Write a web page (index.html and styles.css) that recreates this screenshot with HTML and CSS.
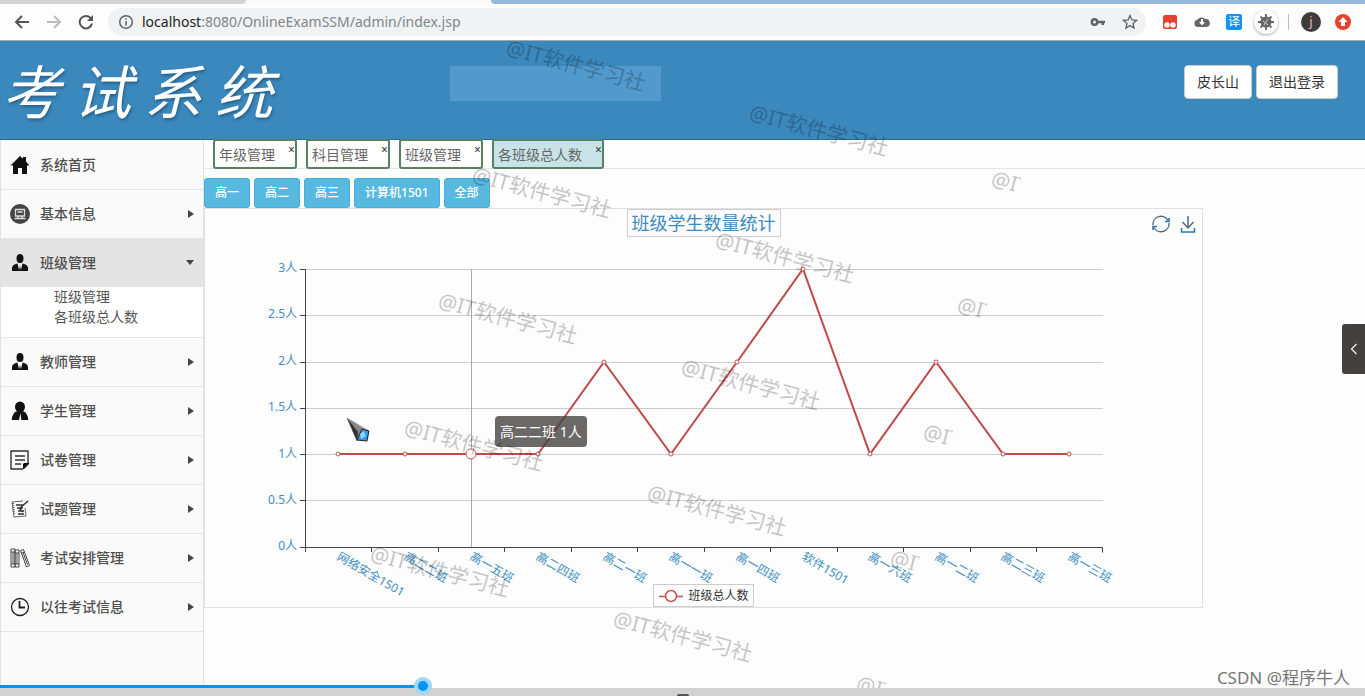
FILE: index.html
```html
<!DOCTYPE html>
<html lang="zh-CN">
<head>
<meta charset="utf-8">
<title>考试系统</title>
<link rel="stylesheet" href="styles.css">
</head>
<body>
<div class="tabstrip"><span class="tabstrip-left"></span><span class="tabstrip-active"></span><span class="tabstrip-rest"></span></div>
<div class="toolbar">
  <button class="icon-btn" aria-label="后退"><svg width="16" height="16" viewBox="0 0 16 16" fill="none" stroke="#555" stroke-width="2"><path d="M15 8H2M8 2L2 8l6 6"/></svg></button>
  <button class="icon-btn" aria-label="前进"><svg width="16" height="16" viewBox="0 0 16 16" fill="none" stroke="#bbb" stroke-width="2"><path d="M1 8h13M8 2l6 6-6 6"/></svg></button>
  <button class="icon-btn" aria-label="刷新"><svg width="16" height="16" viewBox="0 0 16 16"><path d="M13 4.600A6.200 6.200 0 1 0 14 9.500" fill="none" stroke="#555" stroke-width="2"/><path d="M15 1v6H9z" fill="#555"/></svg></button>
  <div class="address">
    <svg width="16" height="16" viewBox="0 0 16 16" fill="none" stroke="#5f6368" stroke-width="1.500"><circle cx="8" cy="8" r="6.300"/><path d="M8 7v4.500M8 4.300v1.500"/></svg>
    <div class="url"><span class="url-host">localhost</span>:8080/OnlineExamSSM/admin/index.jsp</div>
    <svg class="push" width="16" height="16" viewBox="0 0 16 16"><circle cx="4.500" cy="8" r="2.700" fill="none" stroke="#5f6368" stroke-width="2.400"/><path d="M7 6.800h8v2.500h-1V11h-2.500V9.300H7z" fill="#5f6368"/></svg>
    <svg width="16" height="16" viewBox="0 0 16 16" fill="none" stroke="#5f6368" stroke-width="1.300"><path d="M8 1.500l1.900 4.400 4.700.4-3.600 3.100 1.100 4.700L8 11.600l-4.100 2.500L5 9.400 1.400 6.300l4.700-.4z"/></svg>
  </div>
  <div class="extensions">
    <svg width="16" height="16" viewBox="0 0 16 16"><rect x="1" y="1" width="14" height="14" rx="2" fill="#e5412d"/><circle cx="5" cy="11" r="2.700" fill="#fff"/><circle cx="11" cy="11" r="2.700" fill="#fff"/></svg>
    <svg width="16" height="16" viewBox="0 0 16 16"><path d="M4 13a3.700 3.700 0 0 1-.7-7.300A5 5 0 0 1 11 5a4 4 0 0 1 1.500 8z" fill="#666"/><path d="M7 5h2v3h2l-3 3.500L5 8h2z" fill="#fff"/></svg>
    <span class="ext-translate">译</span>
    <span class="ext-bug"><svg width="18" height="18" viewBox="0 0 18 18"><circle cx="9" cy="9" r="5.500" fill="#666"/><path d="M9 1v16M1 9h16M3.500 3.500l11 11M14.500 3.500l-11 11" stroke="#666" stroke-width="1.800"/><path d="M6 8l5 4M7 12l4-6" stroke="#ccc"/></svg></span>
    <span class="ext-sep"></span>
    <span class="avatar">j</span>
    <svg width="16" height="16" viewBox="0 0 16 16"><circle cx="8" cy="8" r="8" fill="#e5412d"/><path d="M8 3l4.500 5H10v4H6V8H3.500z" fill="#fff"/></svg>
  </div>
</div>

<header class="banner">
  <h1 class="brand">考 试 系 统</h1>
  <div class="banner-block"></div>
  <div class="user-actions"><button class="white-btn">皮长山</button><button class="white-btn">退出登录</button></div>
</header>

<div class="layout">
  <nav class="sidebar">
    <a class="item home" href="#"><svg width="20" height="20" viewBox="0 0 20 20" fill="#111"><path d="M10 1l3 2.800V2h3v4.500l3.500 4H17V19h-5v-6H8v6H3v-8.500H.5z"/></svg>系统首页</a>
    <a class="item more" href="#"><svg width="20" height="20" viewBox="0 0 20 20"><circle cx="10" cy="10" r="10" fill="#444"/><path d="M5.500 5.500h9v6.500h-9zM7.500 8h5M4.500 14.500h11M8 12.500v2M12 12.500v2" fill="none" stroke="#ddd" stroke-width="1.300"/></svg>基本信息</a>
    <a class="item more open" href="#"><svg width="20" height="20" viewBox="0 0 20 20" fill="#111"><ellipse cx="10" cy="5.500" rx="3.500" ry="4.500"/><path d="M7.500 10.500L9 17l1-4 1 4 1.500-6.500C16 11.500 18 12.500 18 15v3H2v-3c0-2.500 2-3.500 5.500-4.500z"/></svg>班级管理</a>
    <div class="submenu"><a href="#">班级管理</a><a href="#">各班级总人数</a></div>
    <a class="item more" href="#"><svg width="20" height="20" viewBox="0 0 20 20" fill="#111"><ellipse cx="10" cy="5.500" rx="3.500" ry="4.500"/><path d="M7.500 10.500L9 17l1-4 1 4 1.500-6.500C16 11.500 18 12.500 18 15v3H2v-3c0-2.500 2-3.500 5.500-4.500z"/></svg>教师管理</a>
    <a class="item more" href="#"><svg width="20" height="20" viewBox="0 0 20 20" fill="#111"><ellipse cx="10" cy="6" rx="5" ry="5.500"/><path d="M6 10.500h8c2.500 1.500 4 4 4.300 8.500h-7L10.500 12 9 19H1.700C2 14.500 3.500 12 6 10.500z"/></svg>学生管理</a>
    <a class="item more" href="#"><svg width="20" height="20" viewBox="0 0 20 20"><path d="M18 13V1H1v18h12M5 6h10M5 10h10M5 14h6" fill="none" stroke="#333" stroke-width="1.400"/><path d="M19 13v1l-5 5h-1v-5l1-1z" fill="#111"/></svg>试卷管理</a>
    <a class="item more" href="#"><svg width="20" height="20" viewBox="0 0 20 20" fill="none" stroke="#666"><path d="M13 2L2 3l2 15 12-1-1-8"/><path d="M6 6h8M7 9h6M8 12h6M8 15h6M9 9l4 4M18 2l-9 8" stroke="#333" stroke-width="1.500"/><path d="M3 4l1 12" stroke-width="2" stroke-dasharray="1 1"/></svg>试题管理</a>
    <a class="item more" href="#"><svg width="20" height="20" viewBox="0 0 20 20" fill="none" stroke="#444"><path d="M1 1h4v18H1zM5 2h4v17H5zM10.500 2.500l3-1 6 16-3 1.500zM1 4h4M5 5h4M1 16h4M5 16h4M11.500 5l3-1M3 4v12M7 5v11M13 4.500l4.500 12"/></svg>考试安排管理</a>
    <a class="item more" href="#"><svg width="20" height="20" viewBox="0 0 20 20" fill="none" stroke="#222"><circle cx="10" cy="10" r="8.500" stroke-width="1.300"/><path d="M9.500 4v6.500H15" stroke-width="1.800"/></svg>以往考试信息</a>
  </nav>

  <main class="content">
    <div class="tabs">
      <div class="tab">年级管理<button class="close" aria-label="关闭年级管理">×</button></div>
      <div class="tab">科目管理<button class="close" aria-label="关闭科目管理">×</button></div>
      <div class="tab">班级管理<button class="close" aria-label="关闭班级管理">×</button></div>
      <div class="tab current">各班级总人数<button class="close" aria-label="关闭各班级总人数">×</button></div>
    </div>
    <div class="filters">
      <button>高一</button><button>高二</button><button>高三</button><button>计算机1501</button><button>全部</button>
    </div>
    <section class="chart">
      <div class="chart-head">
        <h2>班级学生数量统计</h2>
        <div class="chart-tools">
          <button class="icon-btn" aria-label="还原"><svg width="18" height="18" viewBox="0 0 18 18" fill="none" stroke="#54697c" stroke-width="1.400"><path d="M1 10a8 8 0 0 1 15-4.500M17 8a8 8 0 0 1-15 4.500"/><path d="M17 3v3.500h-4M1 15v-3.500h4" stroke="#287ab2" stroke-width="1.600"/></svg></button>
          <button class="icon-btn" aria-label="保存为图片"><svg width="16" height="18" viewBox="0 0 16 18" fill="none" stroke="#54697c" stroke-width="1.500"><path d="M8 1v12M2.500 7L8 13l5.500-6"/><path d="M1.500 13v4h13v-4" stroke="#287ab2"/></svg></button>
        </div>
      </div>
      <svg class="plot" width="997" height="346" viewBox="0 0 997 346">
        <path class="grid-line" d="M101 31.500h797M101 77.500h797M101 124.500h797M101 170.500h797M101 216.500h797M101 262.500h797"/>
        <path class="pointer-line" d="M266.500 31v278"/>
        <path class="axis" d="M100.500 31v283M95 31.500h5M95 77.500h5M95 124.500h5M95 170.500h5M95 216.500h5M95 262.500h5M95 309.500h802.500v5M166.500 310v4M233.500 310v4M299.500 310v4M366.500 310v4M432.500 310v4M499.500 310v4M565.500 310v4M632.500 310v4M698.500 310v4M765.500 310v4M831.500 310v4"/>
        <g class="y-labels"><text x="92" y="34">3人</text><text x="92" y="80">2.5人</text><text x="92" y="127">2人</text><text x="92" y="173">1.5人</text><text x="92" y="220">1人</text><text x="92" y="266">0.5人</text><text x="92" y="312">0人</text></g>
        <g class="x-labels">
          <text transform="translate(131 321) rotate(30)">网络安全1501</text><text transform="translate(198 321) rotate(30)">高二二班</text><text transform="translate(264 321) rotate(30)">高一五班</text><text transform="translate(330 321) rotate(30)">高二四班</text><text transform="translate(397 321) rotate(30)">高二一班</text><text transform="translate(463 321) rotate(30)">高一一班</text><text transform="translate(530 321) rotate(30)">高一四班</text><text transform="translate(596 321) rotate(30)">软件1501</text><text transform="translate(662 321) rotate(30)">高一六班</text><text transform="translate(729 321) rotate(30)">高一二班</text><text transform="translate(795 321) rotate(30)">高二三班</text><text transform="translate(862 321) rotate(30)">高一三班</text>
        </g>
        <polyline class="series" points="133,216 200,216 266,216 333,216 399,124 466,216 532,124 598,31 665,216 731,124 798,216 864,216"/>
        <g class="dots"><circle cx="133" cy="216" r="2"/><circle cx="200" cy="216" r="2"/><circle cx="266" cy="216" r="5"/><circle cx="333" cy="216" r="2"/><circle cx="399" cy="124" r="2"/><circle cx="466" cy="216" r="2"/><circle cx="532" cy="124" r="2"/><circle cx="598" cy="31" r="2"/><circle cx="665" cy="216" r="2"/><circle cx="731" cy="124" r="2"/><circle cx="798" cy="216" r="2"/><circle cx="864" cy="216" r="2"/></g>
      </svg>
      <div class="legend"><svg width="24" height="14" viewBox="0 0 24 14" fill="none" stroke="#c85450" stroke-width="1.500"><path d="M0 7.500h6M18 7.500h6"/><circle cx="12" cy="7" r="5.500"/></svg>班级总人数</div>
      <div class="tooltip">高二二班 1人</div>
      <svg class="cursor" width="26" height="26" viewBox="0 0 26 26"><path d="M1 1l22 13-8 1-4 9z" fill="#888" stroke="#aaa"/><path d="M1 1l11 14-1 9z" fill="#333"/><path d="M16 12l7 2-2 10-10-1z" fill="#3098e8" stroke="#222"/><path d="M14 17l4-3 2 5-5 3z" fill="#8bd6ff"/></svg>
    </section>
  </main>
</div>

<button class="drawer" aria-label="展开"><svg width="8" height="12" viewBox="0 0 8 12" fill="none" stroke="#eee" stroke-width="1.300"><path d="M6.500 1l-5 5 5 5"/></svg></button>
<svg class="watermarks" aria-hidden="true">
  <defs><clipPath id="cut"><rect x="0" y="-24" width="28" height="34"/></clipPath></defs>
  <g>
    <text transform="translate(505 54) rotate(15)">@IT软件学习社</text>
    <text transform="translate(748 119) rotate(15)">@IT软件学习社</text>
    <text transform="translate(471 181) rotate(15)">@IT软件学习社</text>
    <text transform="translate(714 246) rotate(15)">@IT软件学习社</text>
    <text transform="translate(437 307) rotate(15)">@IT软件学习社</text>
    <text transform="translate(680 373) rotate(15)">@IT软件学习社</text>
    <text transform="translate(403 434) rotate(15)">@IT软件学习社</text>
    <text transform="translate(646 499) rotate(15)">@IT软件学习社</text>
    <text transform="translate(369 560) rotate(15)">@IT软件学习社</text>
    <text transform="translate(612 625) rotate(15)">@IT软件学习社</text>
    <text clip-path="url(#cut)" transform="translate(990 185) rotate(15)">@IT</text>
    <text clip-path="url(#cut)" transform="translate(956 311) rotate(15)">@IT</text>
    <text clip-path="url(#cut)" transform="translate(922 438) rotate(15)">@IT</text>
    <text clip-path="url(#cut)" transform="translate(889 564) rotate(15)">@IT</text>
    <text clip-path="url(#cut)" transform="translate(855 690) rotate(15)">@IT</text>
  </g>
</svg>
<div class="player"><div class="player-line"><span class="knob"></span></div><div class="player-base"><span class="grip"></span></div></div>
<div class="credit">CSDN @程序牛人</div>
</body>
</html>
```
FILE: styles.css
```css
* { box-sizing: border-box; }
body {
  margin: 0;
  min-height: 100vh;
  display: flex;
  flex-direction: column;
  background: #fdfdfd;
  color: #444;
  font: 14px/20px "Noto Sans", "Noto Sans CJK SC", sans-serif;
  overflow: hidden;
}
button { font: inherit; color: inherit; margin: 0; padding: 0; border: 0; background: none; }
a { color: inherit; text-decoration: none; }
svg { flex: none; }

.tabstrip { display: flex; height: 4px; background: #fafafa; }
.tabstrip-left { width: 18%; background: #d2d3d5; border-radius: 0 0 6px 0; }
.tabstrip-active { width: 18%; }
.tabstrip-rest { flex: 1; background: #95b9dc; border-radius: 0 0 0 6px; }
.toolbar {
  display: flex;
  align-items: center;
  height: 37px;
  padding: 0 14px;
  gap: 16px;
  background: #fdfdfd;
  border-bottom: 1px solid #a5a9ac;
}
.icon-btn { display: flex; }
.address {
  flex: 1;
  display: flex;
  align-items: center;
  gap: 8px;
  height: 28px;
  margin-left: -2px;
  padding: 0 8px 0 10px;
  border-radius: 14px;
  background: #f1f2f4;
}
.url { color: #80868b; }
.url-host { color: #222; }
.push { margin-left: auto; margin-right: 8px; }
.extensions { display: flex; align-items: center; gap: 16px; }
.ext-translate { width: 16px; height: 16px; border-radius: 2px; background: #1592f0; color: #fff; font-size: 12px; line-height: 16px; text-align: center; }
.ext-bug { display: flex; align-items: center; justify-content: center; width: 24px; height: 24px; margin: 0 -4px; border-radius: 50%; background: #fff; box-shadow: 0 1px 3px #aaa; }
.ext-sep { width: 1px; height: 16px; background: #bbb; margin: 0 -4px 0 -2px; }
.avatar { width: 20px; height: 20px; border-radius: 50%; background: #403c3c; color: #e6b8b8; font-size: 13px; line-height: 18px; text-align: center; margin-right: -2px; }

.banner {
  display: grid;
  grid-template-columns: 33% 211px 1fr;
  align-items: start;
  height: 99px;
  background: #3b88bd;
  border-bottom: 1px solid #2c6c80;
}
.brand {
  margin: 0;
  padding: 12px 0 0 2px;
  color: #fff;
  font: italic 400 58px/72px "Noto Sans CJK SC", sans-serif;
  text-shadow: 1px 2px 3px #275f87;
  white-space: nowrap;
}
.banner-block { height: 35px; margin-top: 25px; background: #529acd; }
.user-actions { display: flex; justify-content: flex-end; gap: 4px; padding: 24px 27px 0 0; }
.white-btn { height: 34px; padding: 0 12px; border: 1px solid #ccc; border-radius: 4px; background: #fff; color: #333; }

.layout { flex: 1; display: flex; }
.sidebar { width: 204px; flex: none; background: #fafafa; border: solid #e2e2e2; border-width: 0 1px; }
.item {
  display: flex;
  align-items: center;
  gap: 10px;
  height: 49px;
  padding: 0 9px;
  border-bottom: 1px solid #e5e5e5;
  color: #505050;
  font-weight: 500;
}
.item.home { height: 50px; }
.item.more::after { content: ""; margin-left: auto; border: 4px solid transparent; border-left: 6px solid #444; border-right: 0; }
.item.open { height: 48px; background: #e4e4e4; }
.item.open::after { border: 4px solid transparent; border-top: 5px solid #444; border-bottom: 0; }
.submenu { display: flex; flex-direction: column; height: 51px; padding-left: 53px; background: #fff; border-bottom: 1px solid #e5e5e5; color: #555; }

.content { flex: 1; min-width: 0; }
.tabs { display: flex; gap: 9px; height: 29px; padding-left: 9px; border-bottom: 1px solid #e4e4e4; }
.tab {
  display: flex;
  align-items: flex-start;
  height: 30px;
  margin-top: -1px;
  padding-left: 4px;
  gap: 13px;
  border: 2px solid #568263;
  border-radius: 3px;
  background: #fff;
  color: #666;
  line-height: 28px;
  white-space: nowrap;
}
.tab.current { background: #c8e3e8; }
.close { width: 7px; font-size: 12px; line-height: 18px; color: #333; }
.filters { display: flex; gap: 4px; padding-top: 9px; }
.filters button { height: 30px; padding: 0 10px; border: 1px solid #46b0d8; border-radius: 3px; background: #57b8e0; color: #fff; font-size: 12px; font-weight: 500; }

.chart {
  position: relative;
  display: flex;
  flex-direction: column;
  width: max-content;
  border: 1px solid #e0e0e0;
}
.chart-head { display: grid; grid-template-columns: 1fr auto 1fr; align-items: start; height: 29px; }
.chart-head h2 { grid-column: 2; margin: 0; padding: 0 4px; border: 1px solid #ccc; color: #3b8bbd; font-size: 18px; line-height: 26px; font-weight: 400; }
.chart-tools { display: flex; justify-content: flex-end; gap: 10px; padding: 6px 6px 0 0; }
.plot { display: block; overflow: visible; font-size: 12px; }
.grid-line { stroke: #ccc; fill: none; }
.pointer-line { stroke: #aaa; }
.axis { stroke: #444; fill: none; }
.y-labels { fill: #3f8fc0; text-anchor: end; }
.x-labels { fill: #3f8fc0; }
.series { fill: none; stroke: #c2494a; stroke-width: 2; }
.dots { fill: #fff; stroke: #c85450; }
.legend { align-self: center; display: flex; align-items: center; gap: 5px; height: 23px; padding: 0 4px 0 5px; border: 1px solid #ccc; font-size: 12px; color: #333; }
.tooltip { position: absolute; left: 290px; top: 207px; padding: 5px; border-radius: 4px; background: rgba(70, 66, 66, .8); color: #fff; line-height: 21px; white-space: nowrap; }
.cursor { position: absolute; left: 141px; top: 208px; }

.drawer { position: absolute; right: 0; top: 324px; width: 23px; height: 50px; display: flex; align-items: center; justify-content: center; background: #444040; border-radius: 3px 0 0 3px; }
.watermarks { position: absolute; left: 0; top: 0; width: 100%; height: 100%; pointer-events: none; font-size: 21px; fill: #000; opacity: .22; }
.player { position: absolute; left: 0; right: 0; bottom: 0; }
.player-line { width: 31%; height: 3px; background: #0892f5; position: relative; }
.player-base { height: 8px; background: #d2d2d2; display: flex; justify-content: center; align-items: flex-end; }
.grip { width: 12px; height: 2px; background: #555; border-radius: 2px 2px 0 0; }
.knob { position: absolute; right: -9px; top: -8px; width: 18px; height: 18px; border: 4px solid #a0d8f5; border-radius: 50%; background: #0892f5; }
.credit { position: absolute; right: 15px; bottom: 6px; font-size: 17px; line-height: 24px; color: #777; }
```
